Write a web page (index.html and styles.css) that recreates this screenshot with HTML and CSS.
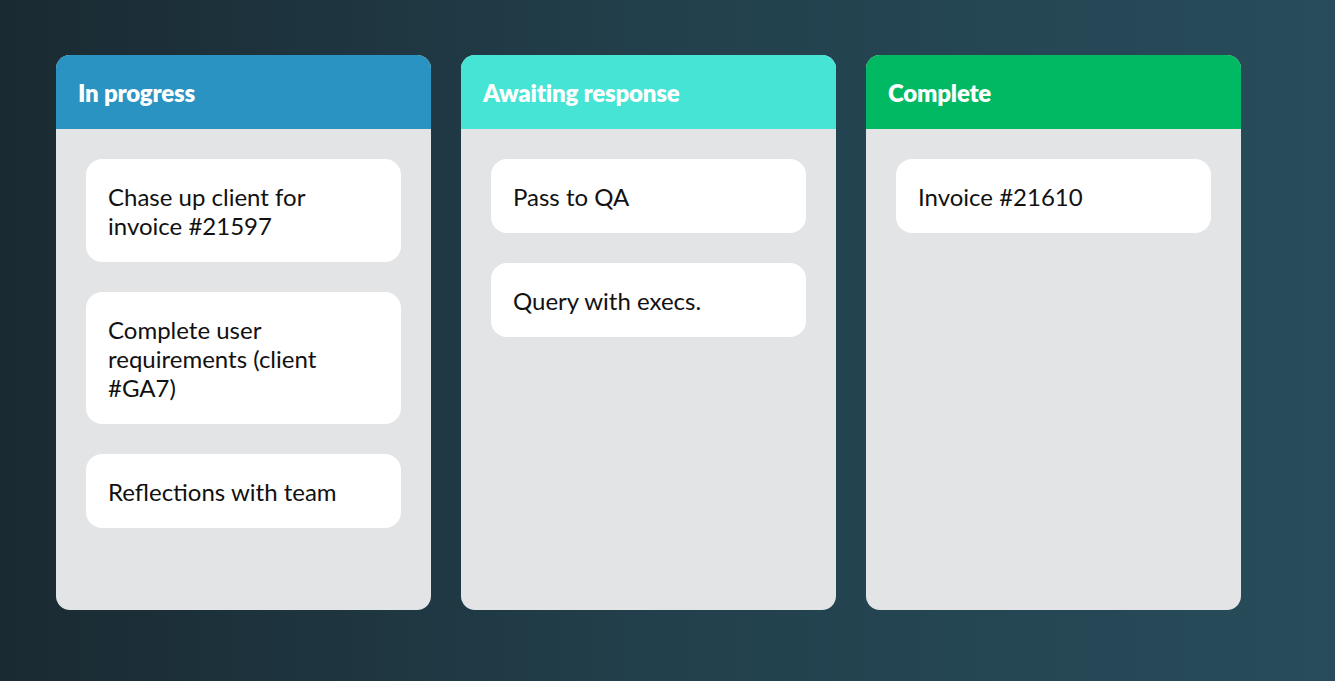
FILE: index.html
```html
<!DOCTYPE html>
<html lang="en">
<head>
<meta charset="utf-8">
<title>Board</title>
<link rel="stylesheet" href="styles.css">
</head>
<body>
<main class="board">
  <section class="column">
    <header class="column-header header-blue">In progress</header>
    <div class="column-body">
      <div class="card">Chase up client for invoice #21597</div>
      <div class="card">Complete user requirements (client #GA7)</div>
      <div class="card">Reflections with team</div>
    </div>
  </section>
  <section class="column">
    <header class="column-header header-teal">Awaiting response</header>
    <div class="column-body">
      <div class="card">Pass to QA</div>
      <div class="card">Query with execs.</div>
    </div>
  </section>
  <section class="column">
    <header class="column-header header-green">Complete</header>
    <div class="column-body">
      <div class="card">Invoice #21610</div>
    </div>
  </section>
</main>
</body>
</html>
```
FILE: styles.css
```css
html, body {
  margin: 0;
  padding: 0;
  height: 100%;
}
body {
  background: linear-gradient(to right, #1a2a32 0%, #22404c 50%, #284c5b 100%);
  font-family: Lato, "Open Sans", sans-serif;
  color: #111;
}
.board {
  display: flex;
  gap: 30px;
  padding: 55px 56px;
  align-items: flex-start;
}
.column {
  width: 375px;
  height: 555px;
  background: #e3e4e6;
  border-radius: 14px;
  overflow: hidden;
  display: flex;
  flex-direction: column;
}
.column-header {
  height: 74px;
  display: flex;
  align-items: center;
  padding: 0 22px;
  font-size: 24px;
  font-weight: 800;
  color: #fff;
  letter-spacing: -0.2px;
  flex-shrink: 0;
}
.header-blue { background: #2a93c2; }
.header-teal { background: #45e4d5; }
.header-green { background: #00b962; }
.column-body {
  padding: 30px;
  display: flex;
  flex-direction: column;
  gap: 30px;
}
.card {
  background: #fff;
  border-radius: 16px;
  padding: 23px 22px 22px;
  font-size: 24px;
  line-height: 29px;
}
```
